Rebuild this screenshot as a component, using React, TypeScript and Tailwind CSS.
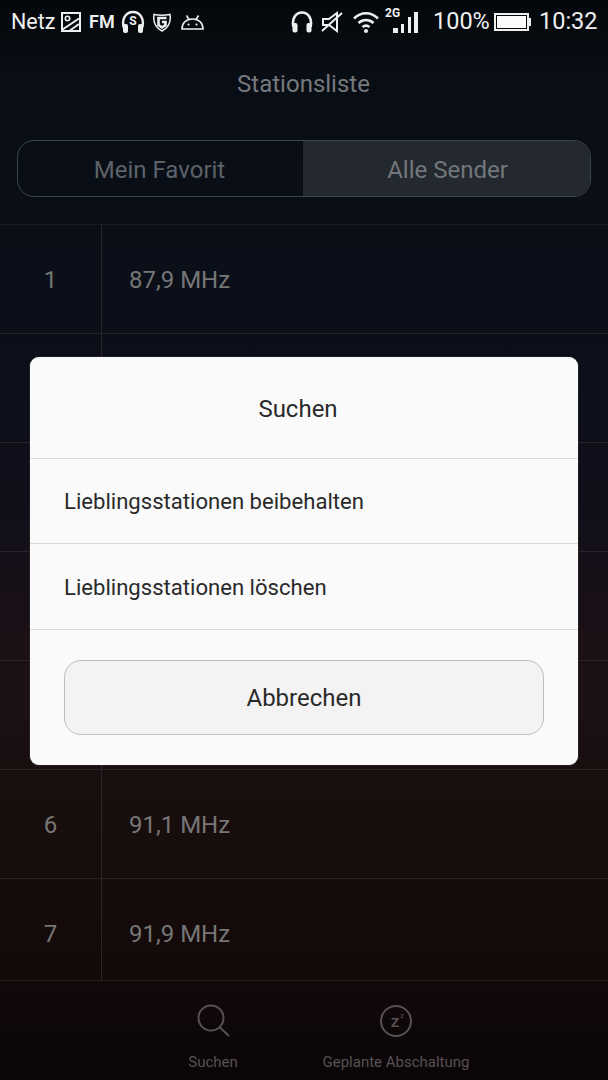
// rows 2-5 sit behind the dialog, so their labels are left empty
const stations = [
  { id: 1, n: '1', f: '87,9 MHz' },
  { id: 2, n: '', f: '' },
  { id: 3, n: '', f: '' },
  { id: 4, n: '', f: '' },
  { id: 5, n: '', f: '' },
  { id: 6, n: '6', f: '91,1 MHz' },
  { id: 7, n: '7', f: '91,9 MHz' },
];

function StatusLeft() {
  return (
    <div className="flex items-center text-[#eef0f0]">
      <span className="w-[44px] text-[21.5px] leading-none whitespace-nowrap">Netz</span>
      <svg className="ml-[6px]" width="20" height="20" viewBox="0 0 20 20" fill="none" stroke="currentColor" strokeWidth="2">
        <rect x="1" y="1" width="18" height="18" />
        <path d="M1.500 17.500 18 6.500" />
        <circle cx="6.500" cy="6.500" r="2.200" strokeWidth="1.600" />
        <path d="M9 18.500 18 12" />
      </svg>
      <span className="ml-[8px] w-[23px] text-[18px] leading-none font-semibold">FM</span>
      <svg className="ml-[9px]" width="24" height="24" viewBox="0 0 24 24" fill="none" stroke="currentColor">
        <path d="M3 18C0 9 5 2 12 2s12 7 9 16" strokeWidth="2.400" />
        <rect x="2" y="14" width="5" height="9" rx="2" fill="currentColor" stroke="none" />
        <rect x="17" y="14" width="5" height="9" rx="2" fill="currentColor" stroke="none" />
        <text x="12" y="15" textAnchor="middle" fontSize="12" fontWeight="700" fill="currentColor" stroke="none">S</text>
      </svg>
      <svg className="ml-[8px]" width="18" height="20" viewBox="0 0 18 20" fill="none" stroke="currentColor">
        <path d="M1 2.500c5 1 11 1 16 0 1 7-1 13-8 16.500C2 15.500 0 9.500 1 2.500Z" strokeWidth="1.500" />
        <path d="M13.500 6H5.500v7l3.500 2.500 3.500-2.500V10H9" strokeWidth="2.600" />
      </svg>
      <svg className="ml-[10px]" width="23" height="15" viewBox="0 0 23 15" fill="none" stroke="currentColor" strokeWidth="1.600">
        <path d="M1 14c0-6 4-10 10.500-10S22 8 22 14H1Z" />
        <path d="M5.500 0.500 8 4.500M17.500 0.500 15 4.500" />
        <circle cx="7.500" cy="9.500" r="1.100" fill="currentColor" stroke="none" />
        <circle cx="15.500" cy="9.500" r="1.100" fill="currentColor" stroke="none" />
      </svg>
    </div>
  );
}

function StatusRight() {
  return (
    <div className="flex items-center text-[#eef0f0]">
      <svg width="22" height="22" viewBox="0 0 22 22" fill="none" stroke="currentColor">
        <path d="M2.500 16C0.500 8 4.500 1.500 11 1.500S21.500 8 19.500 16" strokeWidth="2.600" />
        <rect x="1.500" y="12" width="5" height="9.500" rx="2" fill="currentColor" stroke="none" />
        <rect x="15.500" y="12" width="5" height="9.500" rx="2" fill="currentColor" stroke="none" />
      </svg>
      <svg className="ml-[8px]" width="22" height="22" viewBox="0 0 22 22" fill="none" stroke="currentColor" strokeWidth="2">
        <path d="M2 8h6l8-6v18L8 14H2V8Z" />
        <path d="M1 20 21 2" />
      </svg>
      <svg className="ml-[10px]" width="26" height="22" viewBox="0 0 26 22" fill="none" stroke="currentColor" strokeWidth="2.600">
        <path d="M1 7.500c7-7 17-7 24 0" />
        <path d="M5.500 12c4.500-4 10.500-4 15 0" />
        <path d="M9.500 16c2-1.600 5-1.600 7 0" />
        <circle cx="13" cy="20" r="2" fill="currentColor" stroke="none" />
      </svg>
      <div className="relative ml-[14px] flex h-[21px] w-[25px] items-end justify-between">
        <span className="absolute top-[-5px] left-[-8px] text-[12px] leading-none font-bold">2G</span>
        <div className="h-[5px] w-[5px] bg-[#eef0f0]" />
        <div className="h-[9px] w-[3px] bg-[#eef0f0]" />
        <div className="h-[16px] w-[3px] bg-[#eef0f0]" />
        <div className="h-[21px] w-[4px] bg-[#eef0f0]" />
      </div>
      <span className="ml-[15px] w-[56px] text-[23.5px] leading-none whitespace-nowrap">100%</span>
      <div className="ml-[5px] flex items-center">
        <div className="h-[18px] w-[35px] border-2 border-[#eef0f0] p-[1px]">
          <div className="h-full w-full bg-[#fbfbfb]" />
        </div>
        <div className="h-[8px] w-[2px] bg-[#eef0f0]" />
      </div>
      <span className="ml-[8px] w-[58px] text-[23.5px] leading-none whitespace-nowrap">10:32</span>
    </div>
  );
}

export default function App() {
  return (
    <div className="relative flex h-[1080px] w-[608px] flex-col overflow-hidden bg-[linear-gradient(180deg,#04070a_0,#090d14_70px,#0b0f19_300px,#0f0f1a_500px,#191018_600px,#1c1114_680px,#190e0e_800px,#140a0a_950px,#0a0507_1080px)] font-['Roboto',sans-serif]">
      <div className="flex h-[44px] shrink-0 items-center justify-between px-[11px]">
        <StatusLeft />
        <StatusRight />
      </div>

      <h1 className="mt-[26px] h-[28px] pr-[1px] text-center text-[24px] leading-[28px] text-[#75797e]">Stationsliste</h1>

      <div className="mx-[17px] mt-[42px] flex h-[57px] shrink-0 overflow-hidden rounded-[17px] border border-[#3c444c] text-[24px]">
        <div className="flex flex-1 items-center justify-center pt-[2px] pr-[2px] text-[#5c6269]">Mein Favorit</div>
        <div className="flex w-[287px] items-center justify-center bg-[#24292f] pt-[2px] pl-[2px] text-[#72777c]">Alle Sender</div>
      </div>

      <div className="mt-[27px] flex-1 overflow-hidden border-t border-[#191d24]">
        {stations.map((s) => (
          <div key={s.id} className="flex h-[109px] border-b border-[#2a2224]">
            <div className="flex w-[102px] items-center justify-center border-r border-[#2a2628] pt-[1px] text-[24px] text-[#767676]">{s.n}</div>
            <div className="flex items-center pt-[1px] pl-[27px] text-[24px] text-[#767676]">{s.f}</div>
          </div>
        ))}
      </div>

      <div className="flex h-[100px] shrink-0 border-t border-[#2a2024]">
        <div className="ml-[187px] flex w-[52px] flex-col items-center pt-[22px]">
          <svg className="ml-[1px]" width="36" height="36" viewBox="0 0 36 36" fill="none" stroke="#575154" strokeWidth="2">
            <circle cx="15" cy="15" r="12.500" />
            <path d="M24 24.500 32.500 32.500" strokeLinecap="round" />
          </svg>
          <span className="mt-[13px] text-[15px] leading-[20px] whitespace-nowrap text-[#575154]">Suchen</span>
        </div>
        <div className="ml-[83px] flex w-[148px] flex-col items-center pt-[22px]">
          <svg width="36" height="36" viewBox="0 0 36 36" fill="none" stroke="#575154">
            <circle cx="18" cy="18" r="15" strokeWidth="2" />
            <text x="17" y="24" textAnchor="middle" fontSize="17" fontWeight="500" fill="#575154" stroke="none">z</text>
            <text x="24" y="15" textAnchor="middle" fontSize="7" fill="#575154" stroke="none">z</text>
          </svg>
          <span className="mt-[13px] text-[15px] leading-[20px] whitespace-nowrap text-[#575154]">Geplante Abschaltung</span>
        </div>
      </div>

      <div className="absolute top-[357px] left-[30px] w-[548px] rounded-[9px] bg-[#fafafa] text-[#2a2a2a] shadow-[0_0_1px_rgba(255,255,255,0.6)]">
        <div className="flex h-[101px] items-center justify-center pt-[2px] pr-[12px] text-[24px]">Suchen</div>
        <div className="flex h-[85px] items-center border-t border-[#d9d9d9] pt-[2px] pl-[34px] text-[22.1px]">Lieblingsstationen beibehalten</div>
        <div className="flex h-[86px] items-center border-t border-[#d9d9d9] pt-[2px] pl-[34px] text-[22.1px]">Lieblingsstationen löschen</div>
        <div className="h-[136px] border-t border-[#d9d9d9] px-[34px] pt-[30px]">
          <div className="flex h-[75px] items-center justify-center rounded-[17px] border border-[#bdbdbd] bg-[#f3f3f3] text-[24px]">Abbrechen</div>
        </div>
      </div>
    </div>
  );
}
